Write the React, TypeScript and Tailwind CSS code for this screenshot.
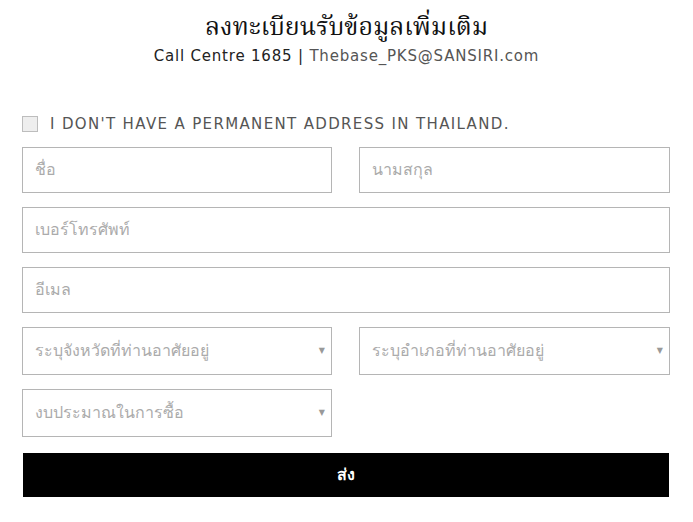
export default function App() {
  const field =
    "h-[46px] w-full border border-[#b5b5b5] bg-white px-3 text-[16px] text-[#333] placeholder:text-[#ababab] outline-none";
  const select =
    "relative flex h-[48px] w-full items-center border border-[#b5b5b5] bg-white px-3 text-[16px] text-[#ababab]";

  return (
    <div className="min-h-screen bg-white font-['DejaVu_Sans',sans-serif]">
      <div className="flex flex-col items-center pt-[12px]">
        <h1 className="font-['Norasi','Noto_Serif_Thai','Kinnari','Liberation_Serif',serif] text-[25px] leading-[33px] text-[#111]">
          ลงทะเบียนรับข้อมูลเพิ่มเติม
        </h1>
        <p className="mt-[2px] text-[15px] leading-[18px] tracking-[0.8px] text-[#222]">
          Call Centre 1685 | <span className="text-[#555]">Thebase_PKS@SANSIRI.com</span>
        </p>
      </div>

      <div className="pl-[22px] pr-[23px] pt-[48px]">
        <label className="flex items-center gap-[12px]">
          <span className="h-[16px] w-[16px] border border-[#bdbdbd] bg-[#eeeeee]" />
          <span className="text-[15px] tracking-[1.35px] text-[#555]">
            I DON'T HAVE A PERMANENT ADDRESS IN THAILAND.
          </span>
        </label>

        <div className="mt-[11px] flex flex-col gap-[14px]">
          <div className="grid grid-cols-[310px_1fr] gap-[27px]">
            <input className={field} placeholder="ชื่อ" />
            <input className={field} placeholder="นามสกุล" />
          </div>
          <input className={field} placeholder="เบอร์โทรศัพท์" />
          <input className={field} placeholder="อีเมล" />
          <div className="grid grid-cols-[310px_1fr] gap-[27px]">
            <div className={select}>
              ระบุจังหวัดที่ท่านอาศัยอยู่
              <span className="absolute right-[6px] top-[17px] text-[8px] text-[#999]">▼</span>
            </div>
            <div className={select}>
              ระบุอำเภอที่ท่านอาศัยอยู่
              <span className="absolute right-[6px] top-[17px] text-[8px] text-[#999]">▼</span>
            </div>
          </div>
          <div className="grid grid-cols-[310px_1fr] gap-[27px]">
            <div className={select}>
              งบประมาณในการซื้อ
              <span className="absolute right-[6px] top-[17px] text-[8px] text-[#999]">▼</span>
            </div>
          </div>
          <button className="mx-[1px] mt-[2px] h-[44px] bg-black text-[16px] font-bold text-white">
            ส่ง
          </button>
        </div>
      </div>
    </div>
  );
}
